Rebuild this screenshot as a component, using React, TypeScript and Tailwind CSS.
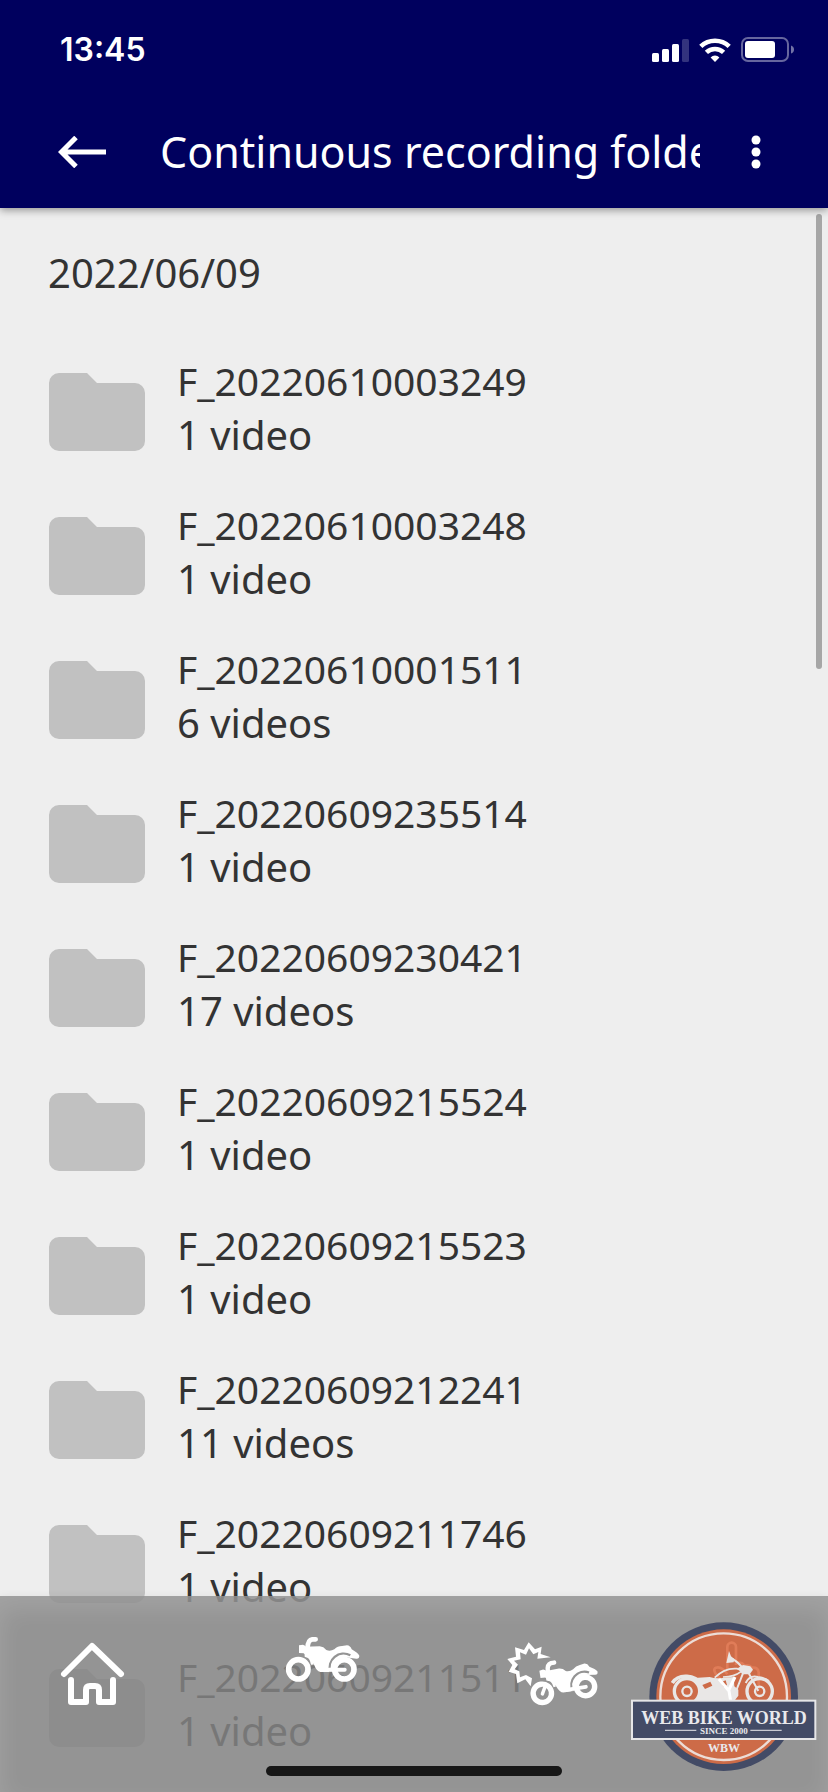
import { useState } from "react";

const FOLDERS = [
  { name: "F_20220610003249", videos: 1 },
  { name: "F_20220610003248", videos: 1 },
  { name: "F_20220610001511", videos: 6 },
  { name: "F_20220609235514", videos: 1 },
  { name: "F_20220609230421", videos: 17 },
  { name: "F_20220609215524", videos: 1 },
  { name: "F_20220609215523", videos: 1 },
  { name: "F_20220609212241", videos: 11 },
  { name: "F_20220609211746", videos: 1 },
  { name: "F_20220609211511", videos: 1 },
];

function StatusBar() {
  return (
    <div className="flex h-24 items-center justify-between pl-[60px] pr-[33px] pt-1">
      <span className="font-['Inter'] text-[32px] font-semibold leading-10">
        13:45
      </span>
      <div className="flex items-center gap-2.5">
        <svg viewBox="0 0 37 24" className="h-6 w-[37px]" fill="#fff">
          <rect x="0" y="15" width="7" height="9" rx="1.5" />
          <rect x="10" y="11" width="7" height="13" rx="1.5" />
          <rect x="20" y="6" width="7" height="18" rx="1.5" />
          <rect x="30" y="1" width="7" height="23" rx="1.5" opacity="0.2" />
        </svg>
        <svg viewBox="0 0 32 24" className="h-6 w-8" fill="none" stroke="#fff">
          <path d="M1.8 8.4a20.5 20.5 0 0 1 28.4 0" strokeWidth="4.6" />
          <path d="M7.4 14.4a12.4 12.4 0 0 1 17.2 0" strokeWidth="4.6" />
          <path d="M16 24l-4.4-4.6a6.2 6.2 0 0 1 8.8 0z" fill="#fff" stroke="none" />
        </svg>
        <svg viewBox="0 0 54 26" className="h-[26px] w-[54px]">
          <rect x="1" y="1" width="46" height="23" rx="6" fill="none" stroke="#fff" strokeWidth="2" opacity="0.4" />
          <rect x="4" y="4" width="30" height="17" rx="3" fill="#fff" />
          <path d="M50 8.5q3 1 3 4t-3 4z" fill="#fff" opacity="0.45" />
        </svg>
      </div>
    </div>
  );
}

function FolderIcon() {
  return (
    <svg viewBox="0 0 97 80" className="h-20 w-[97px] shrink-0" fill="#c1c1c1">
      <path d="M11 1H39L49 11H87a10 10 0 0 1 10 10V69a10 10 0 0 1-10 10H11A10 10 0 0 1 1 69V11A10 10 0 0 1 11 1z" />
    </svg>
  );
}

// Shared by the "all videos" and the "impact videos" tabs
function Motorbike() {
  return (
    <g>
      <path
        d="M72 50L118 49Q130 50 138 60Q150 65 162 58Q172 48 185 48L200 46Q210 47 214 58Q232 68 237 77Q237 87 228 86L196 82L168 98L152 126L120 126Q108 123 102 106Q94 86 73 80z"
        fill="#fff"
      />
      <path d="M150 126A42 42 0 0 1 210 76" fill="none" stroke="#949494" strokeWidth="7" />
      <path d="M56 46l12-2 8 4v18l-4 4-16-1z" fill="#fff" />
      <path d="M72 66Q92 78 96 104" fill="none" stroke="#fff" strokeWidth="8" />
      <path d="M82 54Q82 30 96 28H106" fill="none" stroke="#fff" strokeWidth="14" strokeLinecap="round" />
      <circle cx="54" cy="118" r="29" fill="none" stroke="#fff" strokeWidth="17" />
      <circle cx="192" cy="118" r="29" fill="none" stroke="#fff" strokeWidth="17" />
      <path d="M126 119H193" stroke="#fff" strokeWidth="12" strokeLinecap="round" />
    </g>
  );
}

function HomeIcon() {
  return (
    <svg
      viewBox="0 0 72 72"
      className="h-[72px] w-[72px]"
      fill="none"
      stroke="#fff"
      strokeWidth="6"
      strokeLinecap="round"
      strokeLinejoin="round"
    >
      <path d="M8 38L36 10L65 38" />
      <path d="M15 44V66H30V54q0-4 4-4H39q4 0 4 4V66H57V44" />
    </svg>
  );
}

function BikeIcon() {
  return (
    <svg viewBox="8 18 240 216" className="h-[72px] w-20">
      <Motorbike />
    </svg>
  );
}

function ImpactIcon() {
  return (
    <svg viewBox="12 0 288 216" className="h-[72px] w-24">
      <path
        d="M152 64L122 54L125 32L105 40L86 19L72 42L45 34L48 62L22 69L37 87L26 107L48 114L52 142L76 130L92 151L96 127L78 117L60 124L58 106L44 100L54 86L42 74L62 70L60 49L78 56L87 37L100 55L115 48L112 68z"
        fill="#fff"
      />
      <g transform="translate(127 172) rotate(-9) scale(.95) translate(-54 -118)">
        <Motorbike />
        <path d="M54 120L66 98" stroke="#fff" strokeWidth="11" strokeLinecap="round" />
      </g>
    </svg>
  );
}

function BrandLogo() {
  return (
    <svg viewBox="0 0 186 150" className="h-[150px] w-[186px]">
      <g transform="scale(.33333) translate(-94 -97)">
        <circle cx="372" cy="321" r="223" fill="#434b66" />
        <circle cx="372" cy="321" r="202" fill="#cd6b48" />
        <circle cx="372" cy="321" r="190" fill="none" stroke="#ecdcd6" strokeWidth="7" />
        {/* touch pointer behind the motorbike */}
        <path
          d="M383 240V172a13 13 0 0 1 26 0V226M409 222q14-8 26 6q14-4 22 6q18-2 20 14V300M383 254q-18-26-34-20q-12 6 4 24l26 30"
          fill="none"
          stroke="#e07c58"
          strokeWidth="8"
        />
        <g fill="none" stroke="#e9e7e6">
          <circle cx="262" cy="305" r="38" strokeWidth="10" />
          <circle cx="262" cy="305" r="14" strokeWidth="7" />
          <circle cx="480" cy="305" r="38" strokeWidth="10" />
          <circle cx="480" cy="305" r="14" strokeWidth="7" />
          <path d="M218 280Q232 258 262 260Q290 262 306 284" strokeWidth="11" />
          <path d="M345 264Q375 234 412 237L436 246" strokeWidth="5" />
          <path d="M370 262Q404 262 424 246" strokeWidth="5" />
          <path d="M398 208Q418 218 432 240M432 246L402 322M448 252L476 304M438 280Q450 256 474 262Q496 264 508 274" strokeWidth="6" />
        </g>
        <path d="M272 266L330 262Q350 268 372 264L402 262L404 290L416 300V318L402 336H280Q306 320 300 292z" fill="#e9e7e6" />
        <path d="M308 286L332 276L338 288L316 298zM364 278L378 272L382 286L372 292z" fill="#cd6b48" />
        <path d="M388 184L394 200L404 208L402 218L380 220z" fill="#e9e7e6" />
        <path d="M414 236L430 226L452 230L460 240L450 254L428 254z" fill="#e9e7e6" />
        <path d="M358 268L388 304L394 340M406 262L386 304" fill="none" stroke="#fff" strokeWidth="9" />
        <rect x="97" y="333" width="550" height="115" fill="#434b66" stroke="#e6e6e8" strokeWidth="6" />
        <path d="M196 422H290M452 422H546" stroke="#c9cad2" strokeWidth="4" />
      </g>
      <g
        fill="#e9e9ec"
        textAnchor="middle"
        className="font-['Liberation_Serif',serif] font-bold"
      >
        <text x="93" y="102" className="text-[18px]">WEB BIKE WORLD</text>
        <text x="93" y="112" className="text-[9px]">SINCE 2000</text>
        <text x="93" y="130" className="text-[12px]">WBW</text>
      </g>
    </svg>
  );
}

const TABS = [
  { id: "home", label: "Home", Icon: HomeIcon },
  { id: "continuous", label: "Continuous recordings", Icon: BikeIcon },
  { id: "impact", label: "Impact recordings", Icon: ImpactIcon },
];

export default function App() {
  const [activeTab, setActiveTab] = useState("continuous");

  return (
    <div className="relative flex h-screen flex-col overflow-hidden bg-[#eeeeee] font-['Noto_Sans',sans-serif] text-[#333333]">
      {/* Header */}
      <header className="relative z-10 shrink-0 bg-[#00005e] text-white shadow-[0_2px_8px_rgba(0,0,0,0.4)]">
        <StatusBar />
        <div className="flex h-28 items-center pl-[50px] pr-10">
          <button aria-label="Back" className="flex w-16 shrink-0 justify-center">
            <svg viewBox="0 0 48 32" className="h-8 w-12" fill="none" stroke="#fff" strokeWidth="5">
              <path d="M18 1.500L3.500 16L18 30.500M4 16H48" />
            </svg>
          </button>
          <h1 className="ml-[46px] flex-1 overflow-hidden whitespace-nowrap text-[43px] leading-[60px]">
            Continuous recording folder
          </h1>
          <button aria-label="More options" className="ml-6 flex w-16 shrink-0 justify-center">
            <svg viewBox="0 0 10 34" className="h-[34px] w-2.5" fill="#fff">
              <circle cx="5" cy="5" r="4.500" />
              <circle cx="5" cy="17" r="4.500" />
              <circle cx="5" cy="29" r="4.500" />
            </svg>
          </button>
        </div>
      </header>

      {/* Folder list */}
      <main className="min-h-0 flex-1 overflow-hidden px-12 pt-[38px] text-[40px] leading-[54px]">
        <h2>2022/06/09</h2>
        <ul className="mt-10">
          {FOLDERS.map((folder) => (
            <li key={folder.name} className="flex h-36 items-center gap-8">
              <FolderIcon />
              <div className="pb-2">
                <p className="text-[39px]">{folder.name}</p>
                <p>
                  {folder.videos} {folder.videos === 1 ? "video" : "videos"}
                </p>
              </div>
            </li>
          ))}
        </ul>
      </main>

      {/* Scroll indicator */}
      <div className="absolute right-1.5 top-[214px] h-[455px] w-1.5 rounded-full bg-[#a6a6a6]" />

      {/* Bottom navigation */}
      <nav className="absolute inset-x-0 bottom-0 grid h-[196px] grid-cols-[184fr_277fr_182fr_185fr] items-start bg-[#848484]/85 pt-10 shadow-[inset_0_12px_24px_rgba(255,255,255,0.14),0_0_8px_rgba(0,0,0,0.06)]">
        {TABS.map(({ id, label, Icon }) => (
          <button
            key={id}
            aria-label={label}
            aria-current={activeTab === id ? "page" : undefined}
            onClick={() => setActiveTab(id)}
            className="flex justify-center"
          >
            <Icon />
          </button>
        ))}
        <div className="absolute right-[11px] top-[26px]">
          <BrandLogo />
        </div>
        <div className="absolute bottom-4 left-1/2 h-2.5 w-[296px] -translate-x-1/2 rounded-full bg-[#171717]" />
      </nav>
    </div>
  );
}
